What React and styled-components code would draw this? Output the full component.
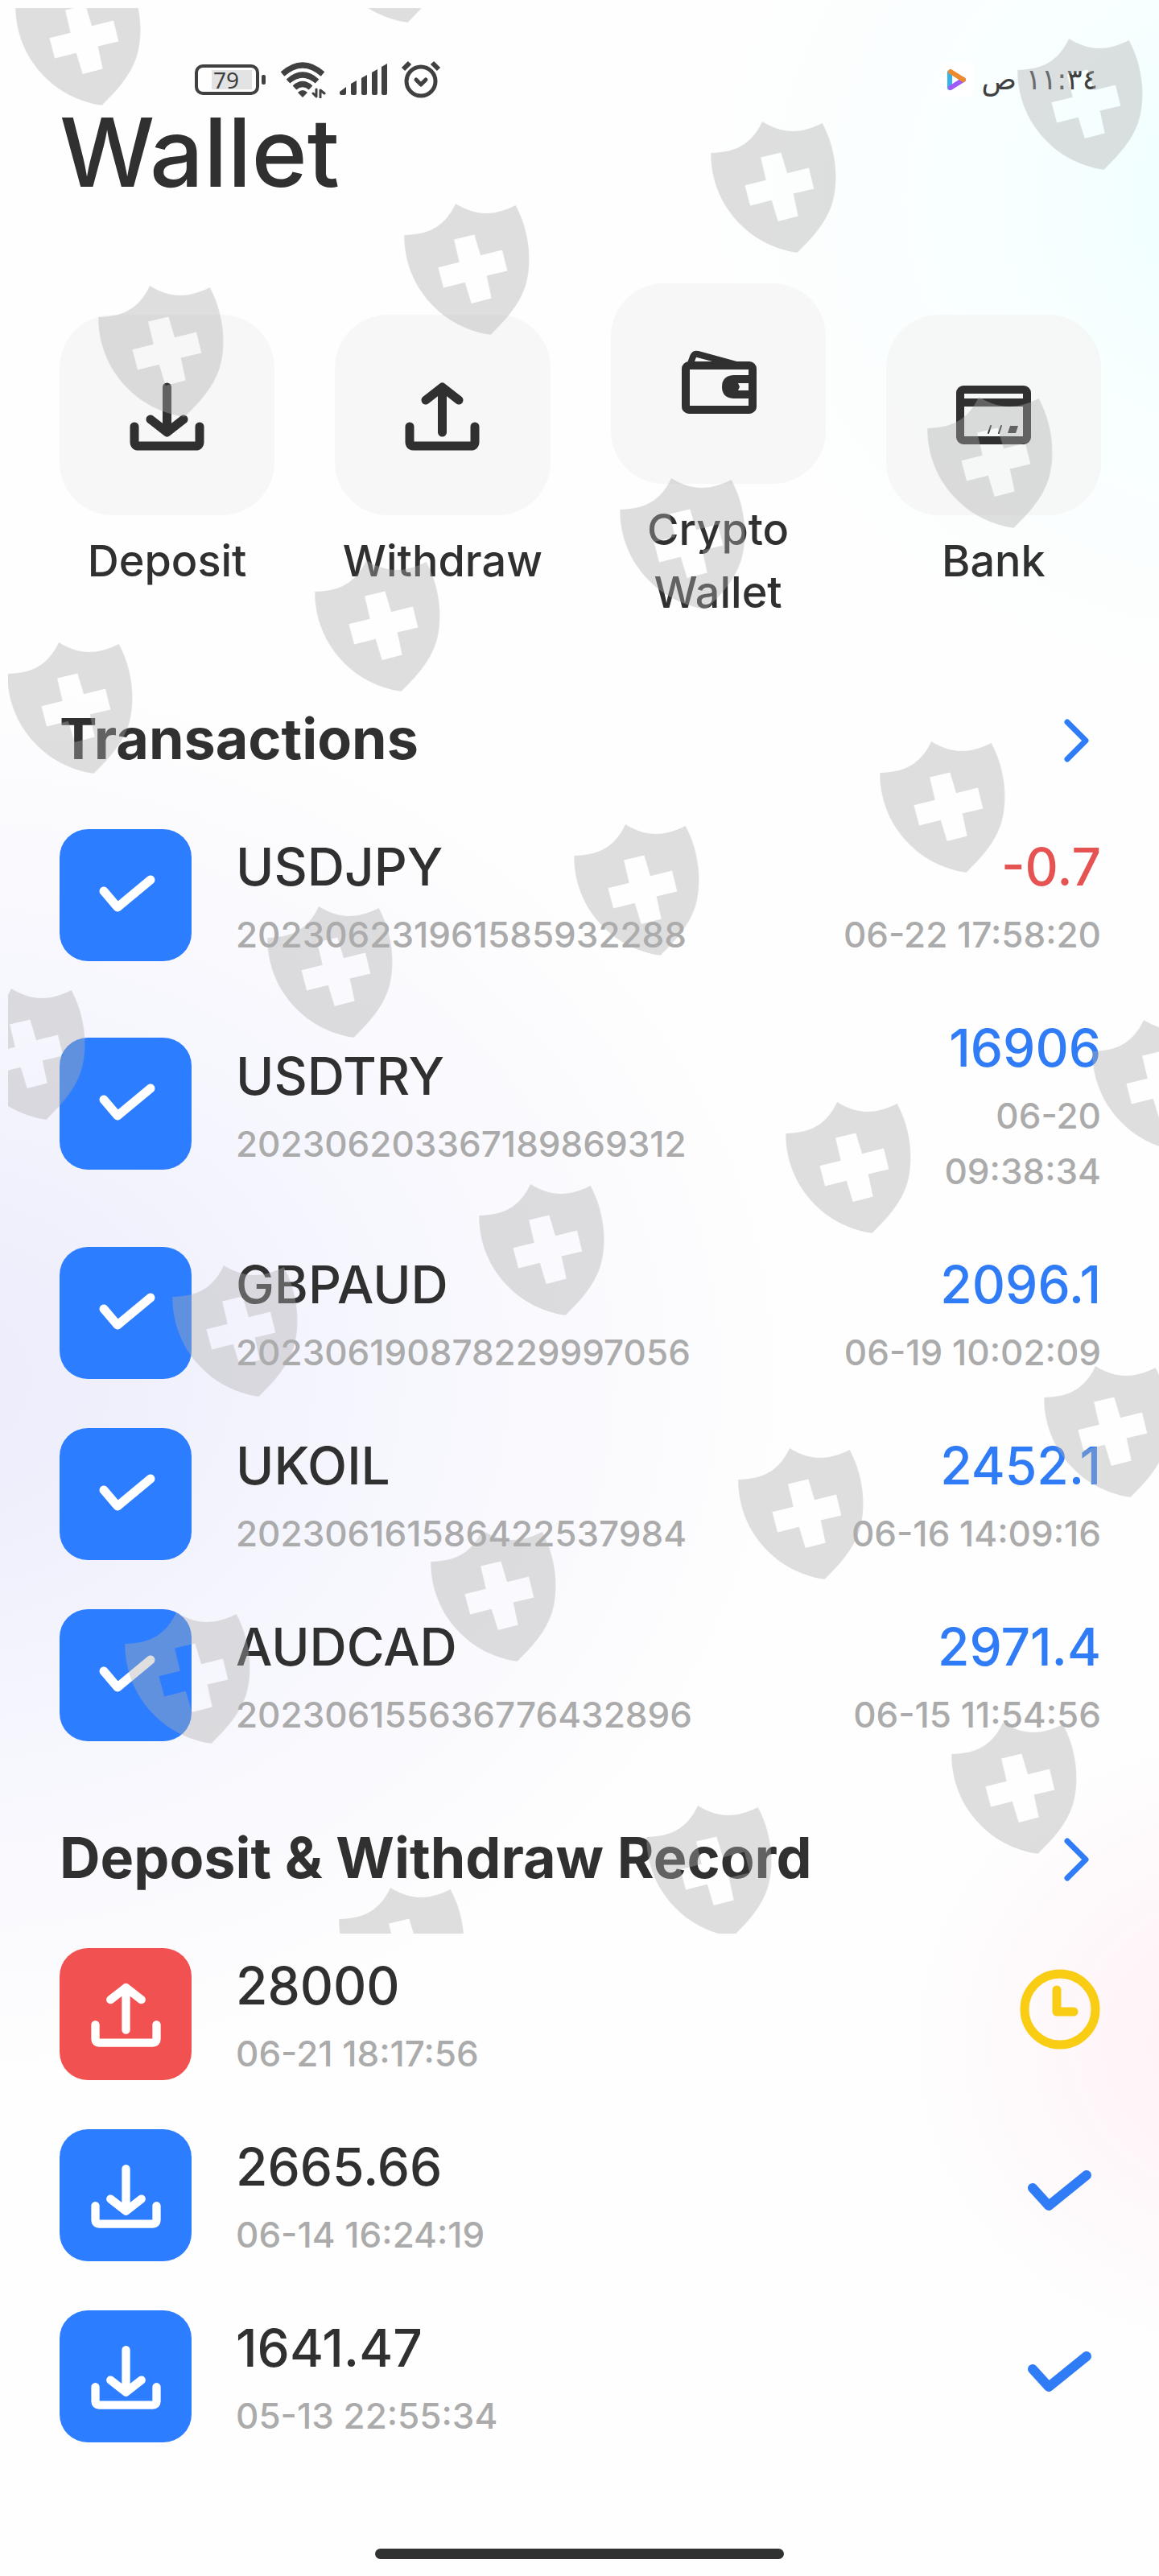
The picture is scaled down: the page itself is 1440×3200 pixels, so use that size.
import React from "react";
import styled, { createGlobalStyle } from "styled-components";

const GlobalStyle = createGlobalStyle`
  * {
    box-sizing: border-box;
  }

  body {
    margin: 0;
    background: #fefefe;
    color: #303030;
    font-family: Inter, "Liberation Sans", sans-serif;
    font-weight: 500;
  }
`;

const Page = styled.div`
  position: relative;
  overflow: hidden;
  padding-bottom: 22px;
  background:
    radial-gradient(720px 620px at 110% 250px, #edffff 0%, rgba(246, 255, 255, 0.7) 50%, rgba(254, 254, 254, 0) 100%),
    radial-gradient(1080px 880px at -6% 1710px, #ebebfb 0%, rgba(243, 243, 254, 0.75) 50%, rgba(250, 250, 255, 0) 100%),
    radial-gradient(400px 380px at 106% 2540px, #fff0f5 0%, rgba(255, 240, 245, 0) 100%),
    #fefefe;
`;

const StatusBar = styled.header`
  display: flex;
  align-items: center;
  justify-content: space-between;
  height: 122px;
  padding: 76px 76px 0 242px;
  color: #404040;
`;

const StatusGroup = styled.div`
  display: flex;
  align-items: center;
  gap: ${(props) => props.$gap}px;
`;

const Battery = styled.div`
  display: flex;
  align-items: center;
  gap: 3px;

  &::after {
    content: "";
    width: 5px;
    height: 12px;
    border-radius: 2px;
    background: #404040;
  }
`;

const BatteryBody = styled.div`
  display: flex;
  align-items: center;
  justify-content: flex-end;
  width: 80px;
  height: 38px;
  padding-right: 5px;
  border: 4px solid #404040;
  border-radius: 10px;
`;

const BatteryLevel = styled.span`
  width: 50px;
  height: 24px;
  padding-left: 2px;
  background: #e3e3e3;
  font: 400 28px/24px "Noto Sans", sans-serif;
`;

const Clock = styled.time`
  font: 400 36px/46px "DejaVu Sans", sans-serif;
`;

const PlayBadge = styled.span`
  display: flex;
  align-items: center;
  justify-content: center;
  width: 42px;
  height: 44px;
  border-radius: 8px;
  background: #fff;
`;

const Content = styled.main`
  padding: 0 72px 0 74px;
`;

const Title = styled.h1`
  margin: 11px 0 107px;
  font-size: 118px;
  font-weight: 500;
  line-height: 112px;
`;

const Actions = styled.nav`
  display: grid;
  grid-template-columns: repeat(4, 1fr);
  align-items: center;
  gap: 75px;
`;

const Action = styled.button`
  display: flex;
  flex-direction: column;
  align-items: center;
  gap: 18px;
  padding: 0;
  border: 0;
  background: none;
  color: inherit;
  font: inherit;
  font-size: 54px;
  line-height: 78px;
`;

const ActionTile = styled.span`
  display: flex;
  align-items: center;
  justify-content: center;
  align-self: stretch;
  height: 249px;
  border-radius: 66px;
  background: rgba(245, 245, 245, 0.8);
`;

const Section = styled.section`
  margin-top: 95px;
`;

const SectionHead = styled.div`
  display: flex;
  align-items: center;
  justify-content: space-between;
  margin-bottom: 61px;
`;

const SectionTitle = styled.h2`
  margin: 0;
  font-size: 70px;
  font-weight: 700;
  line-height: 96px;
`;

const MoreLink = styled.a`
  display: flex;
  color: #2f7cf6;
`;

const List = styled.ul`
  display: flex;
  flex-direction: column;
  gap: 56px;
  margin: 0;
  padding: 0;
  list-style: none;
`;

const Row = styled.li`
  display: flex;
  align-items: center;
  gap: 55px;
`;

const Badge = styled.span`
  display: flex;
  align-items: center;
  justify-content: center;
  flex: none;
  width: 164px;
  height: 164px;
  border-radius: 35px;
  background: ${(props) => (props.$red ? "#f25151" : "#2c7dff")};
  color: #fff;
`;

const RowText = styled.div`
  flex: 1;
  text-align: ${(props) => (props.$end ? "right" : "left")};
`;

const Primary = styled.div`
  color: ${(props) => props.$color || "#303030"};
  font-size: 64px;
  line-height: 100px;
`;

const Secondary = styled.div`
  color: #ababab;
  font-size: 44px;
  line-height: 69px;
  white-space: pre-line;
`;

const HomeIndicator = styled.div`
  width: 508px;
  height: 13px;
  margin: 130px auto 0;
  border-radius: 7px;
  background: #303231;
`;

const Watermark = styled.svg`
  position: absolute;
  top: 10px;
  left: 10px;
  width: calc(100% - 10px);
  height: 2392px;
  pointer-events: none;
`;

const shields = [
  [9, -42], [389, -145],
  [1254, 38], [873, 141], [492, 243], [112, 345],
  [1142, 483], [760, 584], [381, 686], [-1, 788],
  [1083, 911], [703, 1014], [322, 1116], [-60, 1218],
  [1347, 1257], [966, 1359], [585, 1461], [204, 1562],
  [1287, 1687], [907, 1789], [525, 1891], [145, 1993],
  [1172, 2130], [793, 2233], [411, 2335],
];

const ShieldWatermark = () => (
  <Watermark aria-hidden="true">
    <defs>
      <symbol id="shield" viewBox="39 33 468 490">
        <path
          fillRule="evenodd"
          d="M231 33C290 70 360 88 455 39C500 120 522 240 492 340C470 410 415 472 362 522C190 500 38 350 39 150C130 148 190 120 231 33ZM225 167L245 252L166 271L186 347L266 327L290 406L365 386L347 302L424 284L405 206L324 226L301 149Z"
        />
      </symbol>
    </defs>
    <g fill="rgb(176,176,176)" opacity="0.4">
      {shields.map(([x, y]) => (
        <use key={`${x}-${y}`} href="#shield" x={x} y={y} width="156" height="163" />
      ))}
    </g>
  </Watermark>
);

const Svg = ({ w, h, box, stroke = 11, children }) => (
  <svg
    width={w}
    height={h}
    viewBox={box || `0 0 ${w} ${h}`}
    fill="none"
    stroke="currentColor"
    strokeWidth={stroke}
    strokeLinecap="round"
    strokeLinejoin="round"
    aria-hidden="true"
  >
    {children}
  </svg>
);

const DepositIcon = ({ size = 97 }) => (
  <Svg w={size} h={size} box="0 -6 97 97">
    <path d="M8 57V76Q8 81 13 81H84Q89 81 89 76V57M48.5 8V63M28 48L48.5 64L69 48" />
  </Svg>
);

const WithdrawIcon = ({ size = 97 }) => (
  <Svg w={size} h={size} box="0 -6 97 97">
    <path d="M8 57V76Q8 81 13 81H84Q89 81 89 76V57M48.5 64V9M28 24L48.5 8L69 24" />
  </Svg>
);

const WalletIcon = () => (
  <Svg w={98} h={92} stroke={10}>
    <rect x="9" y="23" width="83" height="55" rx="4" />
    <path d="M14 23L18 12Q20 8 24 9L76 23" strokeWidth="8" />
    <path
      d="M92 35H68Q54 36 54 49.500Q54 63 68 64H92ZM74 45L76 49.500L74 54H87V45Z"
      fill="currentColor"
      fillRule="evenodd"
      stroke="none"
    />
  </Svg>
);

const BankIcon = () => (
  <Svg w={100} h={82} stroke={10}>
    <rect x="9" y="9" width="83" height="63" rx="4" />
    <path d="M9 25H92" strokeLinecap="butt" />
    <path d="M47 54L44 63M60 54L57 63" strokeWidth="2" />
    <path d="M71 54H81L78 63H68Z" fill="currentColor" stroke="none" />
  </Svg>
);

const BadgeCheck = () => (
  <Svg w={164} h={164}>
    <path d="M55 77L72 97L113 63" />
  </Svg>
);

const DoneIcon = () => (
  <Svg w={102} h={102} stroke={12}>
    <path d="M17 42L37 64L84 26" />
  </Svg>
);

const PendingIcon = () => (
  <Svg w={102} h={114}>
    <g stroke="#facd15">
      <circle cx="51" cy="51" r="44" />
      <path d="M47 27V54H68" />
    </g>
  </Svg>
);

const Chevron = () => (
  <Svg w={60} h={60} stroke={7}>
    <path d="M18 9L41 32L18 55" />
  </Svg>
);

const WifiIcon = () => (
  <Svg w={60} h={46} stroke={7}>
    <path d="M5 16Q30 -6 55 16" strokeLinecap="butt" />
    <path d="M12 25Q30 9 48 25" strokeLinecap="butt" />
    <path d="M20 33Q30 24 40 33" strokeLinecap="butt" />
    <path d="M24 39Q30 33 36 39L30 45Z" fill="currentColor" stroke="none" />
    <path d="M47 35V44L43 40M52 45V36L57 40" strokeWidth="3" />
  </Svg>
);

const SignalIcon = () => (
  <Svg w={60} h={40}>
    <g fill="currentColor" stroke="none">
      <path d="M0 35L8 29V37Q8 39 6 39H2Q0 39 0 37Z" />
      <path d="M14 25L21 21V37Q21 39 19 39H16Q14 39 14 37Z" />
      <path d="M27 18L34 14V37Q34 39 32 39H29Q27 39 27 37Z" />
      <path d="M40 11L47 7V37Q47 39 45 39H42Q40 39 40 37Z" />
      <path d="M52 4L59 0V37Q59 39 57 39H54Q52 39 52 37Z" />
    </g>
  </Svg>
);

const AlarmIcon = () => (
  <Svg w={50} h={48} stroke={5}>
    <circle cx="25" cy="26" r="18" />
    <path d="M19 24L25 30L31 24" />
    <path d="M3 11L11 3M39 3L47 11" strokeWidth="6" strokeLinecap="butt" />
  </Svg>
);

const PlayIcon = () => (
  <Svg w={26} h={28} stroke={6}>
    <path d="M4 5V24" stroke="#36b3e6" />
    <path d="M5 24L21 14" stroke="#a05af5" />
    <path d="M5 4L21 14" stroke="#ec8a2c" />
  </Svg>
);

const actions = [
  { label: "Deposit", icon: <DepositIcon /> },
  { label: "Withdraw", icon: <WithdrawIcon /> },
  { label: "Crypto Wallet", icon: <WalletIcon /> },
  { label: "Bank", icon: <BankIcon /> },
];

const transactions = [
  { symbol: "USDJPY", id: "202306231961585932288", amount: "-0.7", date: "06-22 17:58:20" },
  { symbol: "USDTRY", id: "202306203367189869312", amount: "16906", date: "06-20\n09:38:34" },
  { symbol: "GBPAUD", id: "202306190878229997056", amount: "2096.1", date: "06-19 10:02:09" },
  { symbol: "UKOIL", id: "202306161586422537984", amount: "2452.1", date: "06-16 14:09:16" },
  { symbol: "AUDCAD", id: "202306155636776432896", amount: "2971.4", date: "06-15 11:54:56" },
];

const records = [
  { type: "withdraw", amount: "28000", date: "06-21 18:17:56", pending: true },
  { type: "deposit", amount: "2665.66", date: "06-14 16:24:19" },
  { type: "deposit", amount: "1641.47", date: "05-13 22:55:34" },
];

const App = () => {
  return (
    <Page>
      <GlobalStyle />
      <StatusBar>
        <StatusGroup $gap={16}>
          <Battery>
            <BatteryBody>
              <BatteryLevel>79</BatteryLevel>
            </BatteryBody>
          </Battery>
          <WifiIcon />
          <SignalIcon />
          <AlarmIcon />
        </StatusGroup>
        <StatusGroup $gap={10}>
          <PlayBadge>
            <PlayIcon />
          </PlayBadge>
          <Clock dir="rtl">١١:٣٤ ص</Clock>
        </StatusGroup>
      </StatusBar>

      <Content>
        <Title>Wallet</Title>
        <Actions>
          {actions.map((action) => (
            <Action key={action.label} type="button">
              <ActionTile>{action.icon}</ActionTile>
              {action.label}
            </Action>
          ))}
        </Actions>

        <Section>
          <SectionHead>
            <SectionTitle>Transactions</SectionTitle>
            <MoreLink href="#transactions" aria-label="All transactions">
              <Chevron />
            </MoreLink>
          </SectionHead>
          <List>
            {transactions.map((item) => (
              <Row key={item.id}>
                <Badge>
                  <BadgeCheck />
                </Badge>
                <RowText>
                  <Primary>{item.symbol}</Primary>
                  <Secondary>{item.id}</Secondary>
                </RowText>
                <RowText $end>
                  <Primary $color={item.amount.startsWith("-") ? "#e55353" : "#2f7cf6"}>
                    {item.amount}
                  </Primary>
                  <Secondary>{item.date}</Secondary>
                </RowText>
              </Row>
            ))}
          </List>
        </Section>

        <Section>
          <SectionHead>
            <SectionTitle>Deposit &amp; Withdraw Record</SectionTitle>
            <MoreLink href="#records" aria-label="All records">
              <Chevron />
            </MoreLink>
          </SectionHead>
          <List>
            {records.map((item) => (
              <Row key={item.date}>
                <Badge $red={item.type === "withdraw"}>
                  {item.type === "withdraw" ? <WithdrawIcon size={91} /> : <DepositIcon size={91} />}
                </Badge>
                <RowText>
                  <Primary>{item.amount}</Primary>
                  <Secondary>{item.date}</Secondary>
                </RowText>
                <MoreLink as="span">{item.pending ? <PendingIcon /> : <DoneIcon />}</MoreLink>
              </Row>
            ))}
          </List>
        </Section>
      </Content>

      <HomeIndicator />
      <ShieldWatermark />
    </Page>
  );
};

export default App;
